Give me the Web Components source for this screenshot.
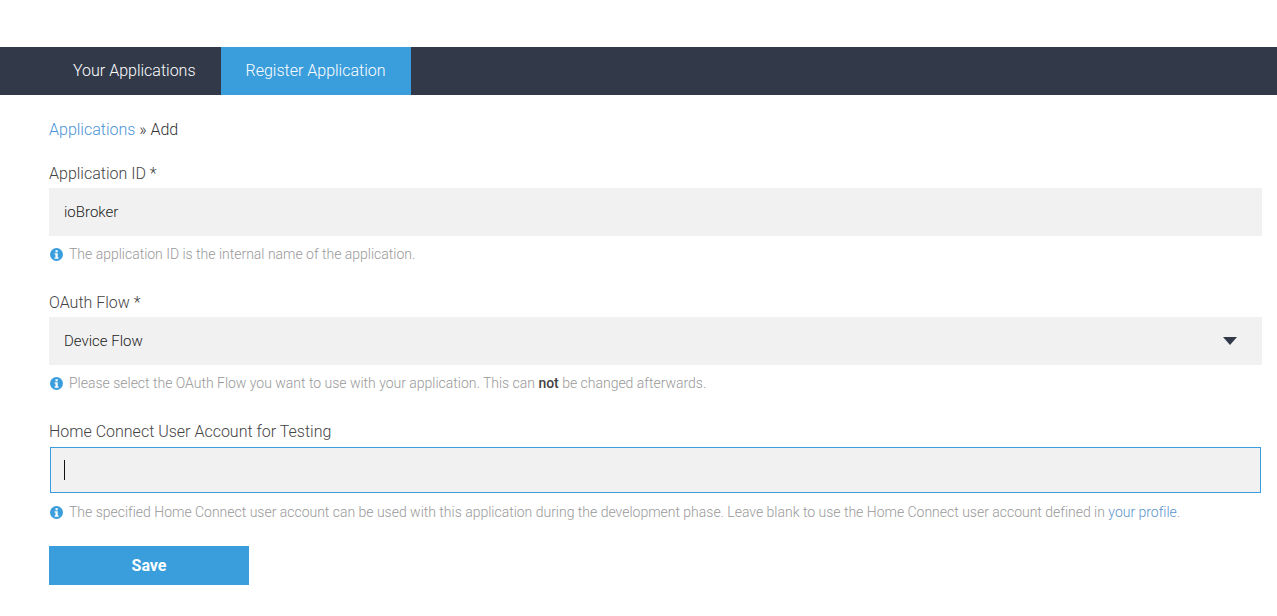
<!DOCTYPE html>
<html lang="en">
<head>
<meta charset="utf-8">
<title>Register Application</title>
<style>
  html, body { margin: 0; background: #fff; }
  body { font-family: Roboto, "Liberation Sans", sans-serif; font-weight: 300; color: #333; }
</style>
</head>
<body>
<app-nav>
  <nav-tab>Your Applications</nav-tab>
  <nav-tab active>Register Application</nav-tab>
</app-nav>
<app-form>
  <bread-crumb slot="crumb" parent="Applications" current="Add"></bread-crumb>
  <form-field label="Application ID *" value="ioBroker">The application ID is the internal name of the application.</form-field>
  <form-field label="OAuth Flow *" value="Device Flow" type="select">Please select the OAuth Flow you want to use with your application. This can <b>not</b> be changed afterwards.</form-field>
  <form-field label="Home Connect User Account for Testing" type="focus">The specified Home Connect user account can be used with this application during the development phase. Leave blank to use the Home Connect user account defined in <a href="#">your profile</a>.</form-field>
  <save-button slot="actions">Save</save-button>
</app-form>
<script>
  // small helper, every element just stamps its own shadow markup
  class Base extends HTMLElement {
    constructor() {
      super();
      this.attachShadow({ mode: "open" });
    }
  }

  class AppNav extends Base {
    connectedCallback() {
      this.shadowRoot.innerHTML = `
        <style>
          :host { display: flex; height: 48px; margin-top: 47px; padding-left: 48px; background: #323a4a; }
        </style>
        <slot></slot>`;
    }
  }

  class NavTab extends Base {
    connectedCallback() {
      this.shadowRoot.innerHTML = `
        <style>
          :host { display: flex; align-items: center; padding: 0 25px 2px; font-size: 16px; font-weight: 300; color: #fff; cursor: pointer; }
          :host([active]) { background: #3a9ddc; }
        </style>
        <slot></slot>`;
    }
  }

  class AppForm extends Base {
    connectedCallback() {
      this.shadowRoot.innerHTML = `
        <style>
          :host { display: block; padding: 0 15px 0 49px; }
          .crumb { height: 69px; display: flex; align-items: center; }
          .fields { display: grid; gap: 30px; }
          .actions { margin-top: 25px; }
        </style>
        <div class="crumb"><slot name="crumb"></slot></div>
        <div class="fields"><slot></slot></div>
        <div class="actions"><slot name="actions"></slot></div>`;
    }
  }

  class BreadCrumb extends Base {
    connectedCallback() {
      this.shadowRoot.innerHTML = `
        <style>
          :host { display: block; font-size: 16px; font-weight: 300; color: #333; }
          a { color: #4b94d6; text-decoration: none; }
        </style>
        <a href="#">${this.getAttribute("parent")}</a> » ${this.getAttribute("current")}`;
    }
  }

  class FormField extends Base {
    connectedCallback() {
      const type = this.getAttribute("type") || "text";
      const value = this.getAttribute("value") || "";
      this.shadowRoot.innerHTML = `
        <style>
          :host { display: block; }
          label { display: block; height: 24px; line-height: 20px; font-size: 16px; font-weight: 300; color: #444; }
          .control { box-sizing: border-box; height: 48px; display: flex; align-items: center; justify-content: space-between; padding: 0 15px; background: #f1f1f1; font-size: 15px; font-weight: 300; color: #222; }
          .control.focus { height: 46px; margin: 1px; padding: 0 13px; border: 1px solid #3a9ddc; }
          .caret { width: 1px; height: 20px; background: #111; }
          .arrow { width: 0; height: 0; margin-right: 10px; border-left: 7.5px solid transparent; border-right: 7.5px solid transparent; border-top: 8px solid #323a4a; }
          .hint { display: flex; align-items: center; gap: 6px; height: 18px; padding-top: 9px; font-size: 14px; letter-spacing: -0.01px; font-weight: 300; color: #999; white-space: nowrap; }
          .hint svg { flex: none; width: 13px; height: 13px; margin-left: 1px; }
          ::slotted(b) { font-weight: 500; color: #444; }
          ::slotted(a) { color: #5a93cc; text-decoration: none; }
        </style>
        <label>${this.getAttribute("label")}</label>
        <div class="control ${type}">
          ${value ? `<span>${value}</span>` : ""}
          ${type === "select" ? `<span class="arrow"></span>` : ""}
          ${type === "focus" ? `<span class="caret"></span>` : ""}
        </div>
        <div class="hint">
          <svg viewBox="0 0 14 14"><circle cx="7" cy="7" r="7" fill="#3a9ddc"/><rect x="5.9" y="2.4" width="2.4" height="2.2" fill="#fff"/><path d="M4.9 5.7h3.4v4.5h1v1.4H4.9v-1.4h1V7.1h-1z" fill="#fff"/></svg>
          <span><slot></slot></span>
        </div>`;
    }
  }

  class SaveButton extends Base {
    connectedCallback() {
      this.shadowRoot.innerHTML = `
        <style>
          :host { display: flex; align-items: center; justify-content: center; width: 200px; height: 39px; background: #3a9ddc; color: #fff; font-size: 16px; font-weight: 700; cursor: pointer; }
        </style>
        <slot></slot>`;
    }
  }

  customElements.define("app-nav", AppNav);
  customElements.define("nav-tab", NavTab);
  customElements.define("app-form", AppForm);
  customElements.define("bread-crumb", BreadCrumb);
  customElements.define("form-field", FormField);
  customElements.define("save-button", SaveButton);
</script>
</body>
</html>
